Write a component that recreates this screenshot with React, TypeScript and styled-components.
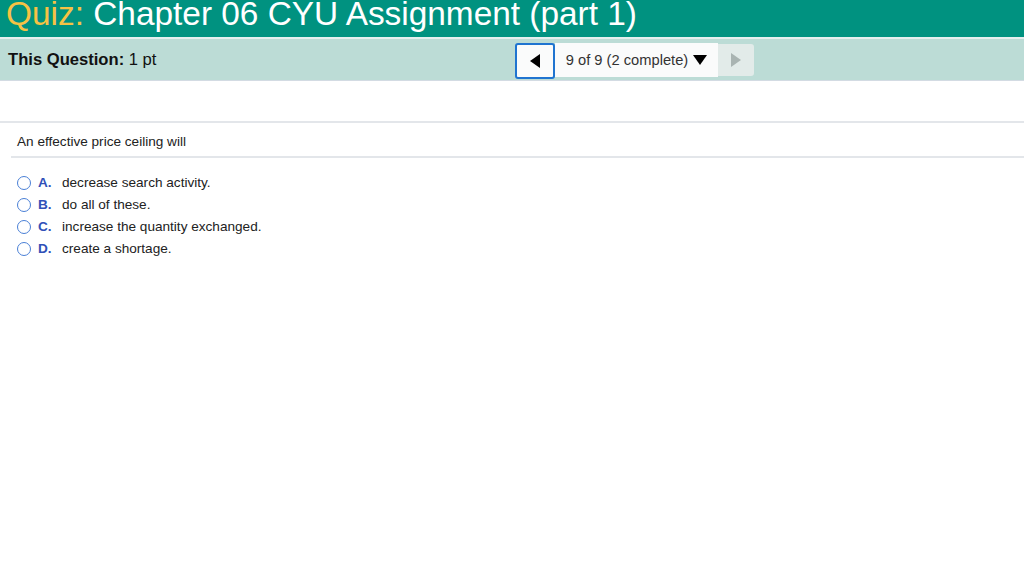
import React from "react";
import styled, { createGlobalStyle } from "styled-components";

const Global = createGlobalStyle`
  html, body { margin: 0; padding: 0; background: #fff; }
  body { font-family: "Liberation Sans", Arial, sans-serif; color: #222; }
`;

const Page = styled.div`
  width: 1024px;
  height: 587px;
  overflow: hidden;
  background: #fff;
`;

const TitleBar = styled.div`
  height: 37px;
  background: #009280;
  border-bottom: 2px solid #e4efee;
  display: flex;
  align-items: flex-end;
  overflow: hidden;
`;

const Title = styled.h1`
  margin: 0 0 0 6px;
  font-family: "Liberation Sans", Arial, sans-serif;
  font-weight: normal;
  font-size: 33.4px;
  line-height: 37px;
  color: #fff;
  white-space: nowrap;
  position: relative;
  top: -5px;
`;

const Accent = styled.span`
  color: #f6c244;
`;

const InfoBar = styled.div`
  height: 41px;
  background: #bcdcd6;
  border-bottom: 1px solid #d3dbe3;
  display: flex;
  align-items: center;
  position: relative;
`;

const Points = styled.div`
  padding-left: 8px;
  font-size: 16.6px;
  color: #111;
  b { font-weight: bold; }
`;

const Nav = styled.div`
  position: absolute;
  left: 515px;
  top: 4px;
  display: flex;
  height: 34px;
`;

const PrevButton = styled.div`
  width: 36px;
  height: 32px;
  border: 2px solid #1f74d0;
  border-radius: 3px;
  background: #fafbfb;
  display: flex;
  align-items: center;
  justify-content: center;
`;

const Counter = styled.div`
  width: 163px;
  height: 34px;
  background: #fafbfb;
  display: flex;
  align-items: center;
  justify-content: center;
  gap: 5px;
  font-size: 14.7px;
  color: #333;
`;

const NextButton = styled.div`
  width: 36px;
  height: 32px;
  margin-top: 1px;
  background: #e2ebe9;
  border-radius: 0 3px 3px 0;
  display: flex;
  align-items: center;
  justify-content: center;
`;

const Spacer = styled.div`
  height: 40px;
  border-bottom: 2px solid #e3e6ea;
`;

const Question = styled.div`
  margin-left: 11px;
  padding: 11px 0 0 6px;
  height: 22px;
  border-bottom: 2px solid #e3e6ea;
  font-size: 13.6px;
  color: #222;
`;

const Choices = styled.div`
  padding: 16px 0 0 17px;
  display: flex;
  flex-direction: column;
  gap: 5px;
`;

const Choice = styled.div`
  display: flex;
  align-items: center;
  height: 17px;
  font-size: 13.6px;
  color: #222;
`;

const Radio = styled.span`
  width: 12px;
  height: 12px;
  border: 1.5px solid #4a7fd6;
  border-radius: 50%;
  background: #fff;
  margin-right: 7px;
`;

const Letter = styled.span`
  color: #3050b8;
  font-weight: bold;
  width: 24px;
`;

const Tri = ({ dir, color }: { dir: "left" | "right" | "down"; color: string }) => {
  if (dir === "left")
    return (
      <svg width="10" height="14" viewBox="0 0 10 14"><polygon points="10,0 10,14 0,7" fill={color} /></svg>
    );
  if (dir === "right")
    return (
      <svg width="10" height="14" viewBox="0 0 10 14"><polygon points="0,0 0,14 10,7" fill={color} /></svg>
    );
  return (
    <svg width="14" height="10" viewBox="0 0 14 10"><polygon points="0,0 14,0 7,10" fill={color} /></svg>
  );
};

const choices = [
  ["A.", "decrease search activity."],
  ["B.", "do all of these."],
  ["C.", "increase the quantity exchanged."],
  ["D.", "create a shortage."],
];

export default function App() {
  return (
    <Page>
      <Global />
      <TitleBar>
        <Title>
          <Accent>Quiz:</Accent> Chapter 06 CYU Assignment (part 1)
        </Title>
      </TitleBar>
      <InfoBar>
        <Points>
          <b>This Question:</b> 1 pt
        </Points>
        <Nav>
          <PrevButton>
            <Tri dir="left" color="#000" />
          </PrevButton>
          <Counter>
            <span>9 of 9 (2 complete)</span>
            <Tri dir="down" color="#000" />
          </Counter>
          <NextButton>
            <Tri dir="right" color="#a9b4b2" />
          </NextButton>
        </Nav>
      </InfoBar>
      <Spacer />
      <Question>An effective price ceiling will</Question>
      <Choices>
        {choices.map(([l, t]) => (
          <Choice key={l}>
            <Radio />
            <Letter>{l}</Letter>
            <span>{t}</span>
          </Choice>
        ))}
      </Choices>
    </Page>
  );
}
